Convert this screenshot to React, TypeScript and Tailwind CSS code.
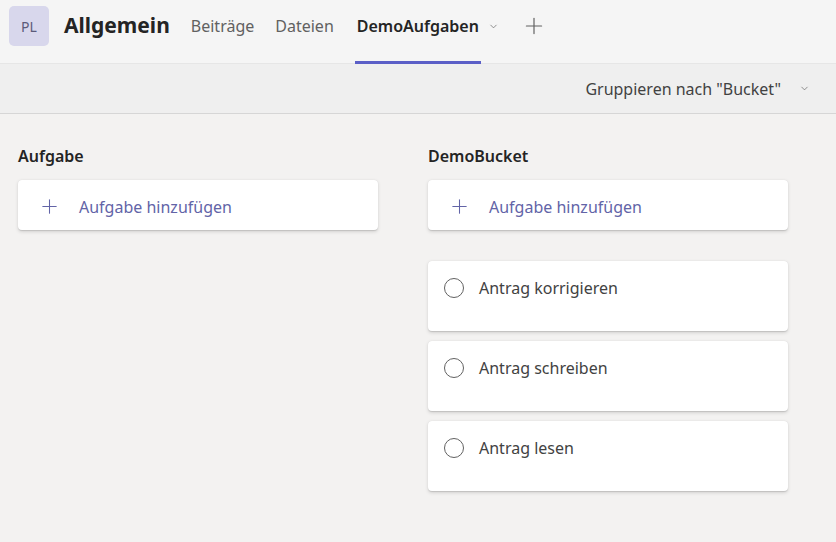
import { ChevronDown, Plus } from "lucide-react";

const font = { fontFamily: '"Noto Sans", "Open Sans", sans-serif' };

type Task = { id: string; title: string };

const tasks: Task[] = [
  { id: "t1", title: "Antrag korrigieren" },
  { id: "t2", title: "Antrag schreiben" },
  { id: "t3", title: "Antrag lesen" },
];

function AddCard() {
  return (
    <div className="flex h-[50px] items-center gap-[18px] rounded bg-white pl-[20px] pt-[3px] shadow-[0_1.6px_3.6px_rgba(0,0,0,0.13),0_0.3px_0.9px_rgba(0,0,0,0.11)]">
      <Plus className="h-[23px] w-[23px] text-[#6264a7]" strokeWidth={1.1} />
      <span className="text-[16px] text-[#6264a7]">Aufgabe hinzufügen</span>
    </div>
  );
}

function TaskCard({ task }: { task: Task }) {
  return (
    <div className="h-[70px] rounded bg-white px-[16px] pt-[15px] shadow-[0_1.6px_3.6px_rgba(0,0,0,0.13),0_0.3px_0.9px_rgba(0,0,0,0.11)]">
      <div className="flex items-center gap-[15px]">
        <span className="h-[20px] w-[20px] rounded-full border-[1.3px] border-[#616161]" />
        <span className="text-[16px] text-[#424242]">{task.title}</span>
      </div>
    </div>
  );
}

export default function App() {
  return (
    <div className="flex h-[542px] w-[836px] flex-col bg-[#f3f2f1]" style={font}>
      {/* Channel header */}
      <div className="flex h-[64px] items-center border-b border-[#e6e6e6] bg-[#f5f5f5] pb-[11px] pl-[9px]">
        <div className="flex h-[40px] w-[40px] items-center justify-center rounded-[5px] bg-[#d8d7ec] text-[14px] text-[#5b5a7a]">
          PL
        </div>
        <div className="ml-[15px] text-[21px] font-bold text-[#242424]">Allgemein</div>
        <div className="ml-[21px] text-[16px] text-[#616161]">Beiträge</div>
        <div className="ml-[21px] text-[16px] text-[#616161]">Dateien</div>
        <div className="relative ml-[23px] flex items-center gap-[9px] text-[16px] font-semibold text-[#242424]">
          <span className="relative">
            DemoAufgaben
            <span className="absolute bottom-[-26px] left-[-2px] right-[-2px] h-[3px] bg-[#5b5fc7]" />
          </span>
          <ChevronDown className="h-[11px] w-[11px] text-[#616161]" strokeWidth={1.5} />
        </div>
        <Plus className="ml-[22px] h-[26px] w-[26px] text-[#616161]" strokeWidth={1.1} />
      </div>

      {/* Toolbar */}
      <div className="flex h-[50px] items-center justify-end border-b border-[#d6d6d6] bg-[#efefef] pr-[26px]">
        <span className="text-[16px] text-[#424242]">Gruppieren nach "Bucket"</span>
        <ChevronDown className="ml-[18px] h-[11px] w-[11px] text-[#616161]" strokeWidth={1.5} />
      </div>

      {/* Board */}
      <div className="flex gap-[50px] px-[18px] pt-[30px]">
        <div className="flex w-[360px] flex-col">
          <div className="mb-[12px] text-[16px] font-semibold text-[#242424]">Aufgabe</div>
          <AddCard />
        </div>
        <div className="flex w-[360px] flex-col">
          <div className="mb-[12px] text-[16px] font-semibold text-[#242424]">DemoBucket</div>
          <AddCard />
          <div className="mt-[31px] flex flex-col gap-[10px]">
            {tasks.map((t) => (
              <TaskCard key={t.id} task={t} />
            ))}
          </div>
        </div>
      </div>
    </div>
  );
}
